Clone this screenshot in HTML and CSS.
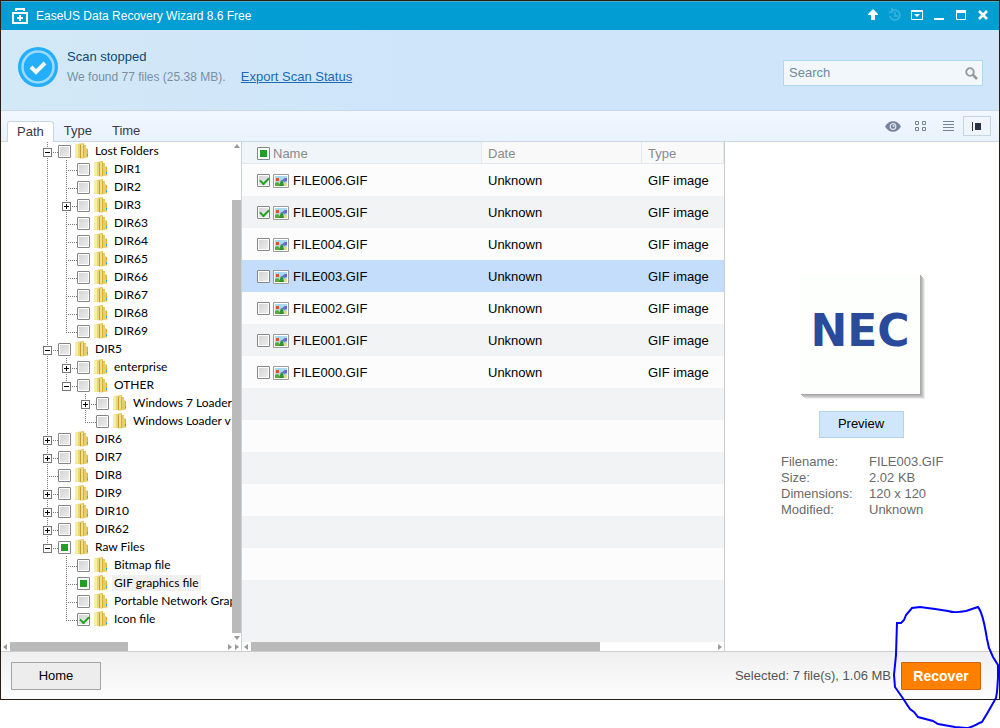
FILE: index.html
```
<!DOCTYPE html>
<html lang="en">
<head>
  <meta charset="utf-8">
  <title>EaseUS Data Recovery Wizard 8.6 Free</title>
  <link rel="stylesheet" href="styles.css">
</head>
<body>
  <!-- Shared icons -->
  <svg class="defs" width="0" height="0">
    <symbol id="folder" viewBox="0 0 14 16">
      <path d="M2 1l7-1v2l2 0v3l2 1v8l-5 1.500-8-1V2z" fill="#e3c95c"/>
      <path d="M0 2l3-1v14l-3-1z" fill="#f6eda6"/>
      <path d="M3 1l2 0v14l-2 0z" fill="#ead67a"/>
      <path d="M5 2l1 0v13l-1 .5z" fill="#c4a032"/>
      <path d="M6 2l2-1v13l-2 1z" fill="#f1e18b"/>
      <path d="M8 2l1 0v12l-1 .5z" fill="#cfae3e"/>
      <path d="M9 3h2v3l2 1v7l-4 1z" fill="#e6cf68"/>
      <path d="M12 6l1 0v8l-1 .5z" fill="#d2b545"/>
      <path d="M12 11h1v2h-1z" fill="#3fa9e0"/>
    </symbol>
    <symbol id="picture" viewBox="0 0 16 14">
      <path d="M.5.5h15v13H.5z" fill="#fff" stroke="#9a9a9a"/>
      <path d="M2 2h12v10H2z" fill="#a9d8f5"/>
      <path d="M2 9h12v3H2z" fill="#e8d98a"/>
      <path d="M2 9l3-1 3 4H2z" fill="#5fa63c"/>
      <path d="M6 12l2-6 2 1 1 5z" fill="#2f9633"/>
      <path d="M3 4h3v3H3z" fill="#e0532a"/>
      <path d="M9 6l3-2 2 0v3l-3 1z" fill="#6468cf"/>
    </symbol>
  </svg>

  <div class="window">
    <header class="titlebar">
      <svg class="app-icon" width="16" height="16" viewBox="0 0 16 16" fill="none" stroke="#fff" stroke-width="2">
        <path d="M4 3V1h8v2M1 5h14v10H1z"/>
        <path d="M8 7v6M5 10h6"/>
      </svg>
      <h1>EaseUS Data Recovery Wizard 8.6 Free</h1>
      <button aria-label="Upgrade"><svg width="14" height="14" viewBox="0 0 14 14"><path d="M7 1l5 5v1H9v5H5V7H2V6z" fill="#fff"/></svg></button>
      <button aria-label="History"><svg width="14" height="14" viewBox="0 0 14 14" fill="none" stroke="#3fb3de" stroke-width="1.600"><path d="M4 3a5 5 0 1 1-2 5M4 0v4H1M7 4v4h3"/></svg></button>
      <button aria-label="Menu"><svg width="12" height="10" viewBox="0 0 12 10"><path d="M.5 1v8.500h11V1z" fill="none" stroke="#fff"/><path d="M0 0h12v2H0zM3 4h6L6 7z" fill="#fff"/></svg></button>
      <button aria-label="Minimize"><svg width="10" height="10" viewBox="0 0 10 10"><path d="M0 8h10v2H0z" fill="#fff"/></svg></button>
      <button aria-label="Maximize"><svg width="10" height="10" viewBox="0 0 10 10"><path d="M.5 2v7.500h9V2" fill="none" stroke="#fff"/><path d="M0 0h10v3H0z" fill="#fff"/></svg></button>
      <button aria-label="Close"><svg width="10" height="10" viewBox="0 0 10 10"><path d="M1 1l8 8M9 1L1 9" stroke="#fff" stroke-width="2.500"/></svg></button>
    </header>

    <section class="status">
      <svg width="40" height="40" viewBox="0 0 40 40">
        <circle cx="20" cy="20" r="20" fill="#25aefb"/>
        <circle cx="20" cy="20" r="15.500" fill="none" stroke="#9ddbfb" stroke-width="2.500"/>
        <path d="M13 20l5 5 9-9" fill="none" stroke="#f2f8fd" stroke-width="4"/>
      </svg>
      <div class="status-text">
        <h2>Scan stopped</h2>
        <p>We found 77 files (25.38 MB). <a href="#">Export Scan Status</a></p>
      </div>
      <div class="search">
        <input type="text" placeholder="Search" aria-label="Search">
        <svg width="13" height="13" viewBox="0 0 13 13" fill="none" stroke="#999"><circle cx="5" cy="5" r="3.800" stroke-width="1.800"/><path d="M8 8l4 4" stroke-width="2.500"/></svg>
      </div>
    </section>

    <nav class="tabs">
      <button class="tab active">Path</button>
      <button class="tab">Type</button>
      <button class="tab">Time</button>
      <div class="views">
        <button aria-label="Preview"><svg width="16" height="11" viewBox="0 0 16 11"><path d="M0 5.500C4-1.500 12-1.500 16 5.500 12 12.500 4 12.500 0 5.500z" fill="#74829a"/><circle cx="8" cy="5.500" r="2.800" fill="#74829a" stroke="#dde4ee" stroke-width="1.200"/><circle cx="8.500" cy="5" r="1" fill="#dde4ee"/></svg></button>
        <button aria-label="Icons"><svg width="12" height="10" viewBox="0 0 12 10" fill="none" stroke="#74829a"><path d="M.5.5h3v3h-3zM7.500.5h3v3h-3zM.5 6.500h3v3h-3zM7.500 6.500h3v3h-3z"/></svg></button>
        <button aria-label="List"><svg width="12" height="10" viewBox="0 0 12 10" stroke="#74829a"><path d="M0 .5h11M0 3.500h11M0 6.500h11M0 9.500h11"/></svg></button>
        <button class="active" aria-label="Details"><svg width="10" height="9" viewBox="0 0 10 9" fill="#2b3440"><path d="M0 0h1v9H0zM3 1h6v7H3z"/></svg></button>
      </div>
    </nav>

    <main class="content">
      <aside class="sidebar">
        <div class="tree-area">
          <ul class="tree">
            <li>
              <div class="node"><button class="toggle open" aria-label="Collapse"></button><label><input type="checkbox"><svg><use href="#folder"/></svg><span>Lost Folders</span></label></div>
              <ul>
                <li><div class="node"><label><input type="checkbox"><svg><use href="#folder"/></svg><span>DIR1</span></label></div></li>
                <li><div class="node"><label><input type="checkbox"><svg><use href="#folder"/></svg><span>DIR2</span></label></div></li>
                <li><div class="node"><button class="toggle" aria-label="Expand"></button><label><input type="checkbox"><svg><use href="#folder"/></svg><span>DIR3</span></label></div></li>
                <li><div class="node"><label><input type="checkbox"><svg><use href="#folder"/></svg><span>DIR63</span></label></div></li>
                <li><div class="node"><label><input type="checkbox"><svg><use href="#folder"/></svg><span>DIR64</span></label></div></li>
                <li><div class="node"><label><input type="checkbox"><svg><use href="#folder"/></svg><span>DIR65</span></label></div></li>
                <li><div class="node"><label><input type="checkbox"><svg><use href="#folder"/></svg><span>DIR66</span></label></div></li>
                <li><div class="node"><label><input type="checkbox"><svg><use href="#folder"/></svg><span>DIR67</span></label></div></li>
                <li><div class="node"><label><input type="checkbox"><svg><use href="#folder"/></svg><span>DIR68</span></label></div></li>
                <li><div class="node"><label><input type="checkbox"><svg><use href="#folder"/></svg><span>DIR69</span></label></div></li>
              </ul>
            </li>
            <li>
              <div class="node"><button class="toggle open" aria-label="Collapse"></button><label><input type="checkbox"><svg><use href="#folder"/></svg><span>DIR5</span></label></div>
              <ul>
                <li><div class="node"><button class="toggle" aria-label="Expand"></button><label><input type="checkbox"><svg><use href="#folder"/></svg><span>enterprise</span></label></div></li>
                <li>
                  <div class="node"><button class="toggle open" aria-label="Collapse"></button><label><input type="checkbox"><svg><use href="#folder"/></svg><span>OTHER</span></label></div>
                  <ul>
                    <li><div class="node"><button class="toggle" aria-label="Expand"></button><label><input type="checkbox"><svg><use href="#folder"/></svg><span>Windows 7 Loader</span></label></div></li>
                    <li><div class="node"><label><input type="checkbox"><svg><use href="#folder"/></svg><span>Windows Loader v1</span></label></div></li>
                  </ul>
                </li>
              </ul>
            </li>
            <li><div class="node"><button class="toggle" aria-label="Expand"></button><label><input type="checkbox"><svg><use href="#folder"/></svg><span>DIR6</span></label></div></li>
            <li><div class="node"><button class="toggle" aria-label="Expand"></button><label><input type="checkbox"><svg><use href="#folder"/></svg><span>DIR7</span></label></div></li>
            <li><div class="node"><label><input type="checkbox"><svg><use href="#folder"/></svg><span>DIR8</span></label></div></li>
            <li><div class="node"><button class="toggle" aria-label="Expand"></button><label><input type="checkbox"><svg><use href="#folder"/></svg><span>DIR9</span></label></div></li>
            <li><div class="node"><button class="toggle" aria-label="Expand"></button><label><input type="checkbox"><svg><use href="#folder"/></svg><span>DIR10</span></label></div></li>
            <li><div class="node"><button class="toggle" aria-label="Expand"></button><label><input type="checkbox"><svg><use href="#folder"/></svg><span>DIR62</span></label></div></li>
            <li>
              <div class="node"><button class="toggle open" aria-label="Collapse"></button><label><input type="checkbox" class="partial"><svg><use href="#folder"/></svg><span>Raw Files</span></label></div>
              <ul>
                <li><div class="node"><label><input type="checkbox"><svg><use href="#folder"/></svg><span>Bitmap file</span></label></div></li>
                <li><div class="node current"><label><input type="checkbox" class="partial"><svg><use href="#folder"/></svg><span>GIF graphics file</span></label></div></li>
                <li><div class="node"><label><input type="checkbox"><svg><use href="#folder"/></svg><span>Portable Network Grap</span></label></div></li>
                <li><div class="node"><label><input type="checkbox" checked><svg><use href="#folder"/></svg><span>Icon file</span></label></div></li>
              </ul>
            </li>
          </ul>
          <div class="vscroll"><i class="arrow up"></i><div class="thumb"></div><i class="arrow down"></i></div>
        </div>
        <div class="hscroll"><i class="arrow left"></i><div class="thumb"></div><i class="arrow right"></i><i class="arrow right"></i></div>
      </aside>

      <section class="files">
        <table>
          <thead>
            <tr><th class="name"><label><input type="checkbox" class="partial">Name</label></th><th class="date">Date</th><th>Type</th></tr>
          </thead>
          <tbody>
            <tr><td><label><input type="checkbox" checked><svg><use href="#picture"/></svg>FILE006.GIF</label></td><td>Unknown</td><td>GIF image</td></tr>
            <tr><td><label><input type="checkbox" checked><svg><use href="#picture"/></svg>FILE005.GIF</label></td><td>Unknown</td><td>GIF image</td></tr>
            <tr><td><label><input type="checkbox"><svg><use href="#picture"/></svg>FILE004.GIF</label></td><td>Unknown</td><td>GIF image</td></tr>
            <tr class="selected"><td><label><input type="checkbox"><svg><use href="#picture"/></svg>FILE003.GIF</label></td><td>Unknown</td><td>GIF image</td></tr>
            <tr><td><label><input type="checkbox"><svg><use href="#picture"/></svg>FILE002.GIF</label></td><td>Unknown</td><td>GIF image</td></tr>
            <tr><td><label><input type="checkbox"><svg><use href="#picture"/></svg>FILE001.GIF</label></td><td>Unknown</td><td>GIF image</td></tr>
            <tr><td><label><input type="checkbox"><svg><use href="#picture"/></svg>FILE000.GIF</label></td><td>Unknown</td><td>GIF image</td></tr>
          </tbody>
        </table>
        <div class="empty-rows"></div>
        <div class="hscroll"><i class="arrow left"></i><div class="thumb"></div><i class="arrow right"></i></div>
      </section>

      <aside class="preview">
        <div class="thumbnail">NEC</div>
        <button class="btn-preview">Preview</button>
        <dl>
          <dt>Filename:</dt><dd>FILE003.GIF</dd>
          <dt>Size:</dt><dd>2.02 KB</dd>
          <dt>Dimensions:</dt><dd>120 x 120</dd>
          <dt>Modified:</dt><dd>Unknown</dd>
        </dl>
      </aside>
    </main>

    <footer class="footer">
      <button class="btn-home">Home</button>
      <span class="summary">Selected: 7 file(s), 1.06 MB</span>
      <button class="btn-recover">Recover</button>
    </footer>
  </div>

  <!-- Hand-drawn ring around the Recover button -->
  <svg class="scribble" width="110" height="124" viewBox="890 604 110 124">
    <path d="M898 623L901 623 904 620 906 615 912 608 920 607 935 609 948 611C954 613 961 612 966 611L978 607C983 613 985 627 987 639L989 648 993 657 998 665 998 678 997 692 996 698 988 712 982 722C976 724 972 728 966 728L955 727 938 724 933 721 918 717 914 712 910 709 902 697 895 687 894 675 896 655 897 622"/>
  </svg>
</body>
</html>
```

FILE: styles.css
```
* {
  box-sizing: border-box;
}
body {
  margin: 0;
  background: #fff;
  font-family: "Liberation Sans", Arial, sans-serif;
  font-size: 13px;
  line-height: 16px;
  color: #000;
}
h1, h2, p, ul, dl, dd {
  margin: 0;
  padding: 0;
  font-size: inherit;
  font-weight: normal;
}
button {
  font: inherit;
  border: 0;
  padding: 0;
  background: none;
  cursor: pointer;
}
svg {
  flex: none;
}
.defs, .scribble {
  position: absolute;
}
.scribble {
  top: 604px;
  right: 0;
  fill: none;
  stroke: #0000fe;
  stroke-width: 2;
  pointer-events: none;
}
.window {
  display: flex;
  flex-direction: column;
  min-height: calc(100vh - 28px);
  border: 1px solid #2a1d14;
}

/* Title bar */
.titlebar {
  display: flex;
  align-items: center;
  height: 29px;
  padding: 0 5px 0 11px;
  background: #029dd3;
  border-top: 1px solid #4fa9c9;
  color: #fff;
  font-size: 12px;
}
.titlebar h1 {
  flex: 1;
  margin-left: 8px;
}
.titlebar button {
  display: flex;
  align-items: center;
  justify-content: center;
  width: 22px;
  height: 28px;
  padding-bottom: 2px;
}

/* Scan status */
.status {
  display: flex;
  align-items: center;
  height: 80px;
  padding: 0 16px 6px 17px;
  background: linear-gradient(90deg, #d3e9f7, #cfe5fa 40%);
}
.status-text {
  flex: 1;
  margin-left: 9px;
}
.status h2 {
  color: #0b4a70;
  margin-bottom: 4px;
}
.status p {
  color: #7590a4;
  font-size: 12px;
}
.status a {
  margin-left: 12px;
  color: #1b6ab5;
  font-size: 13px;
}
.search {
  display: flex;
  align-items: center;
  width: 200px;
  height: 26px;
  margin-top: 12px;
  padding: 0 4px 0 5px;
  background: #f1f7fb;
  border: 1px solid #b0d8ee;
}
.search input {
  flex: 1;
  min-width: 0;
  padding: 0;
  border: 0;
  outline: 0;
  background: none;
  font: inherit;
}
.search input::placeholder {
  color: #7089a0;
}

/* Tabs */
.tabs {
  display: flex;
  align-items: flex-end;
  height: 32px;
  padding: 0 8px 0 6px;
  background: linear-gradient(#f2f7ff, #e9f2fd);
  border-top: 1px solid #c8d8e6;
  border-bottom: 1px solid #c8d6e4;
}
.tab {
  height: 20px;
  padding: 0 10px;
  color: #3a3a4a;
}
.tab.active {
  margin-bottom: -1px;
  height: 21px;
  padding: 0 9px;
  background: #fff;
  border: 1px solid #c8d6e4;
  border-bottom: 0;
  border-radius: 3px 3px 0 0;
}
.views {
  display: flex;
  align-self: center;
  margin-left: auto;
}
.views button {
  display: flex;
  align-items: center;
  justify-content: center;
  width: 28px;
  height: 20px;
}
.views .active {
  border: 1px solid #c5d5e3;
  background: #f0f5fc;
}

/* Check boxes */
input[type="checkbox"] {
  appearance: none;
  flex: none;
  width: 13px;
  height: 13px;
  margin: 0;
  border: 1px solid #858585;
  border-radius: 1px;
  background: linear-gradient(135deg, #d2d2d2, #eee);
  box-shadow: inset 0 0 0 1px #fff;
}
input[type="checkbox"].partial {
  background: #21a121;
  box-shadow: inset 0 0 0 2px #fff;
}
input:checked::before {
  content: "";
  display: block;
  width: 7px;
  height: 4px;
  margin: 2px;
  border: solid #21a121;
  border-width: 0 0 2px 2px;
  transform: rotate(-45deg);
}

/* Panels */
.content {
  display: flex;
  flex: 1;
}
.sidebar {
  display: flex;
  flex-direction: column;
  width: 241px;
  border-right: 1px solid #cbd1d8;
}
.tree-area {
  display: flex;
  flex: 1;
}

/* Folder tree */
.tree {
  flex: 1;
  padding-left: 42px;
  overflow: hidden;
  font-family: Lato, "Open Sans", sans-serif;
  font-size: 12px;
}
.tree ul {
  padding-left: 19px;
}
.tree li {
  position: relative;
  list-style: none;
}
.tree li::before {
  content: "";
  position: absolute;
  left: 4px;
  top: 0;
  bottom: 0;
  width: 1px;
  background: repeating-linear-gradient(#777 0 1px, #fff 1px 2px);
}
.tree li:last-child::before {
  bottom: auto;
  height: 10px;
}
.node {
  position: relative;
  display: flex;
  align-items: center;
  height: 18px;
  white-space: nowrap;
}
.node::before {
  content: "";
  position: absolute;
  left: 4px;
  top: 10px;
  width: 11px;
  height: 1px;
  background: repeating-linear-gradient(90deg, #777 0 1px, #fff 1px 2px);
}
.node label {
  display: flex;
  flex: none;
  align-items: center;
  margin-left: 15px;
}
.node svg {
  width: 14px;
  height: 16px;
  margin: 0 4px;
}
.node span {
  padding: 0 2px;
}
.current span {
  background: #f0f0f0;
}
.toggle {
  position: relative;
  flex: none;
  top: 1px;
  width: 9px;
  height: 9px;
  border: 1px solid #777;
  background:
    linear-gradient(#000, #000) center / 5px 1px no-repeat,
    linear-gradient(#000, #000) center / 1px 5px no-repeat,
    #fff;
}
.toggle.open {
  background: linear-gradient(#000, #000) center / 5px 1px no-repeat, #fff;
}
.toggle + label {
  margin-left: 6px;
}

/* Scroll bars */
.vscroll {
  display: flex;
  flex-direction: column;
  align-items: center;
  width: 9px;
  padding: 2px 0;
}
.vscroll .thumb {
  width: 9px;
  height: 433px;
  margin: auto 0 3px;
}
.hscroll {
  display: flex;
  align-items: center;
  gap: 3px;
  height: 9px;
  padding: 0 2px;
  background: #fff;
}
.hscroll .thumb {
  width: 50%;
  height: 9px;
  margin-right: auto;
}
.files .hscroll .thumb {
  width: 73%;
}
.thumb {
  background: #bababa;
}
.arrow {
  border: 3px solid transparent;
}
.arrow.up {
  border-top: 0;
  border-bottom: 4px solid #999;
}
.arrow.down {
  border-bottom: 0;
  border-top: 4px solid #999;
}
.arrow.left {
  border-left: 0;
  border-right: 4px solid #999;
}
.arrow.right {
  border-right: 0;
  border-left: 4px solid #999;
}

/* File list */
.files {
  display: flex;
  flex: 1;
  flex-direction: column;
  border-right: 1px solid #ccc;
}
table {
  width: 100%;
  border-collapse: collapse;
  table-layout: fixed;
}
th, td {
  padding: 1px 0 0 6px;
  text-align: left;
  font-weight: normal;
}
th {
  height: 22px;
  color: #8a8a8a;
  background: #f9f9f9;
  box-shadow: inset -1px -1px #e2e8ee;
}
th.name {
  width: 240px;
  background: #f0f5f9;
}
th.date {
  width: 160px;
}
td {
  height: 32px;
}
th:first-child, td:first-child {
  padding-left: 15px;
}
.files label {
  display: flex;
  align-items: center;
  gap: 3px;
}
.files label svg {
  width: 16px;
  height: 14px;
}
td label svg {
  margin-right: 1px;
}
tbody tr {
  background: #fcfcfc;
}
tbody tr:nth-child(even) {
  background: #f2f3f5;
}
tbody tr.selected {
  background: #c4ddfb;
}
.empty-rows {
  flex: 1;
  background:
    repeating-linear-gradient(#f2f3f5 0 32px, #fcfcfc 32px 64px) top / 100% 192px no-repeat,
    #f2f3f5;
}

/* Preview */
.preview {
  display: flex;
  flex-direction: column;
  align-items: center;
  justify-content: center;
  width: 274px;
  padding: 0 2px 2px 0;
}
.thumbnail {
  width: 120px;
  height: 120px;
  margin-right: 2px;
  background: #fdfffc;
  box-shadow: 1px 1px #aaa, 2px 2px #b4b4b4, 3px 3px #c4c4c4, 4px 4px #d8d8d8, 5px 5px #eee;
  color: #2a4b9b;
  font: bold 44px/114px "DejaVu Sans", sans-serif;
  text-align: center;
}
.btn-preview {
  width: 85px;
  height: 27px;
  margin: 17px 0 16px;
  background: #d0e7fb;
  border: 1px solid #b3d4ea;
}
.preview dl {
  display: grid;
  grid-template-columns: 88px 72px;
  color: #6a6a6a;
}

/* Footer */
.footer {
  display: flex;
  align-items: center;
  height: 48px;
  padding: 0 18px 0 10px;
  background: linear-gradient(#f0f0f0, #fdfdfd);
  border-top: 1px solid #ccc;
}
.btn-home {
  width: 90px;
  height: 28px;
  background: #ededed;
  border: 1px solid #a5a5a5;
}
.summary {
  margin: 0 10px 0 auto;
  color: #555;
}
.btn-recover {
  width: 80px;
  height: 28px;
  background: #ff7f00;
  border: 1px solid #cc6310;
  border-radius: 1px;
  color: #fff;
  font-size: 14px;
  font-weight: bold;
}
```
